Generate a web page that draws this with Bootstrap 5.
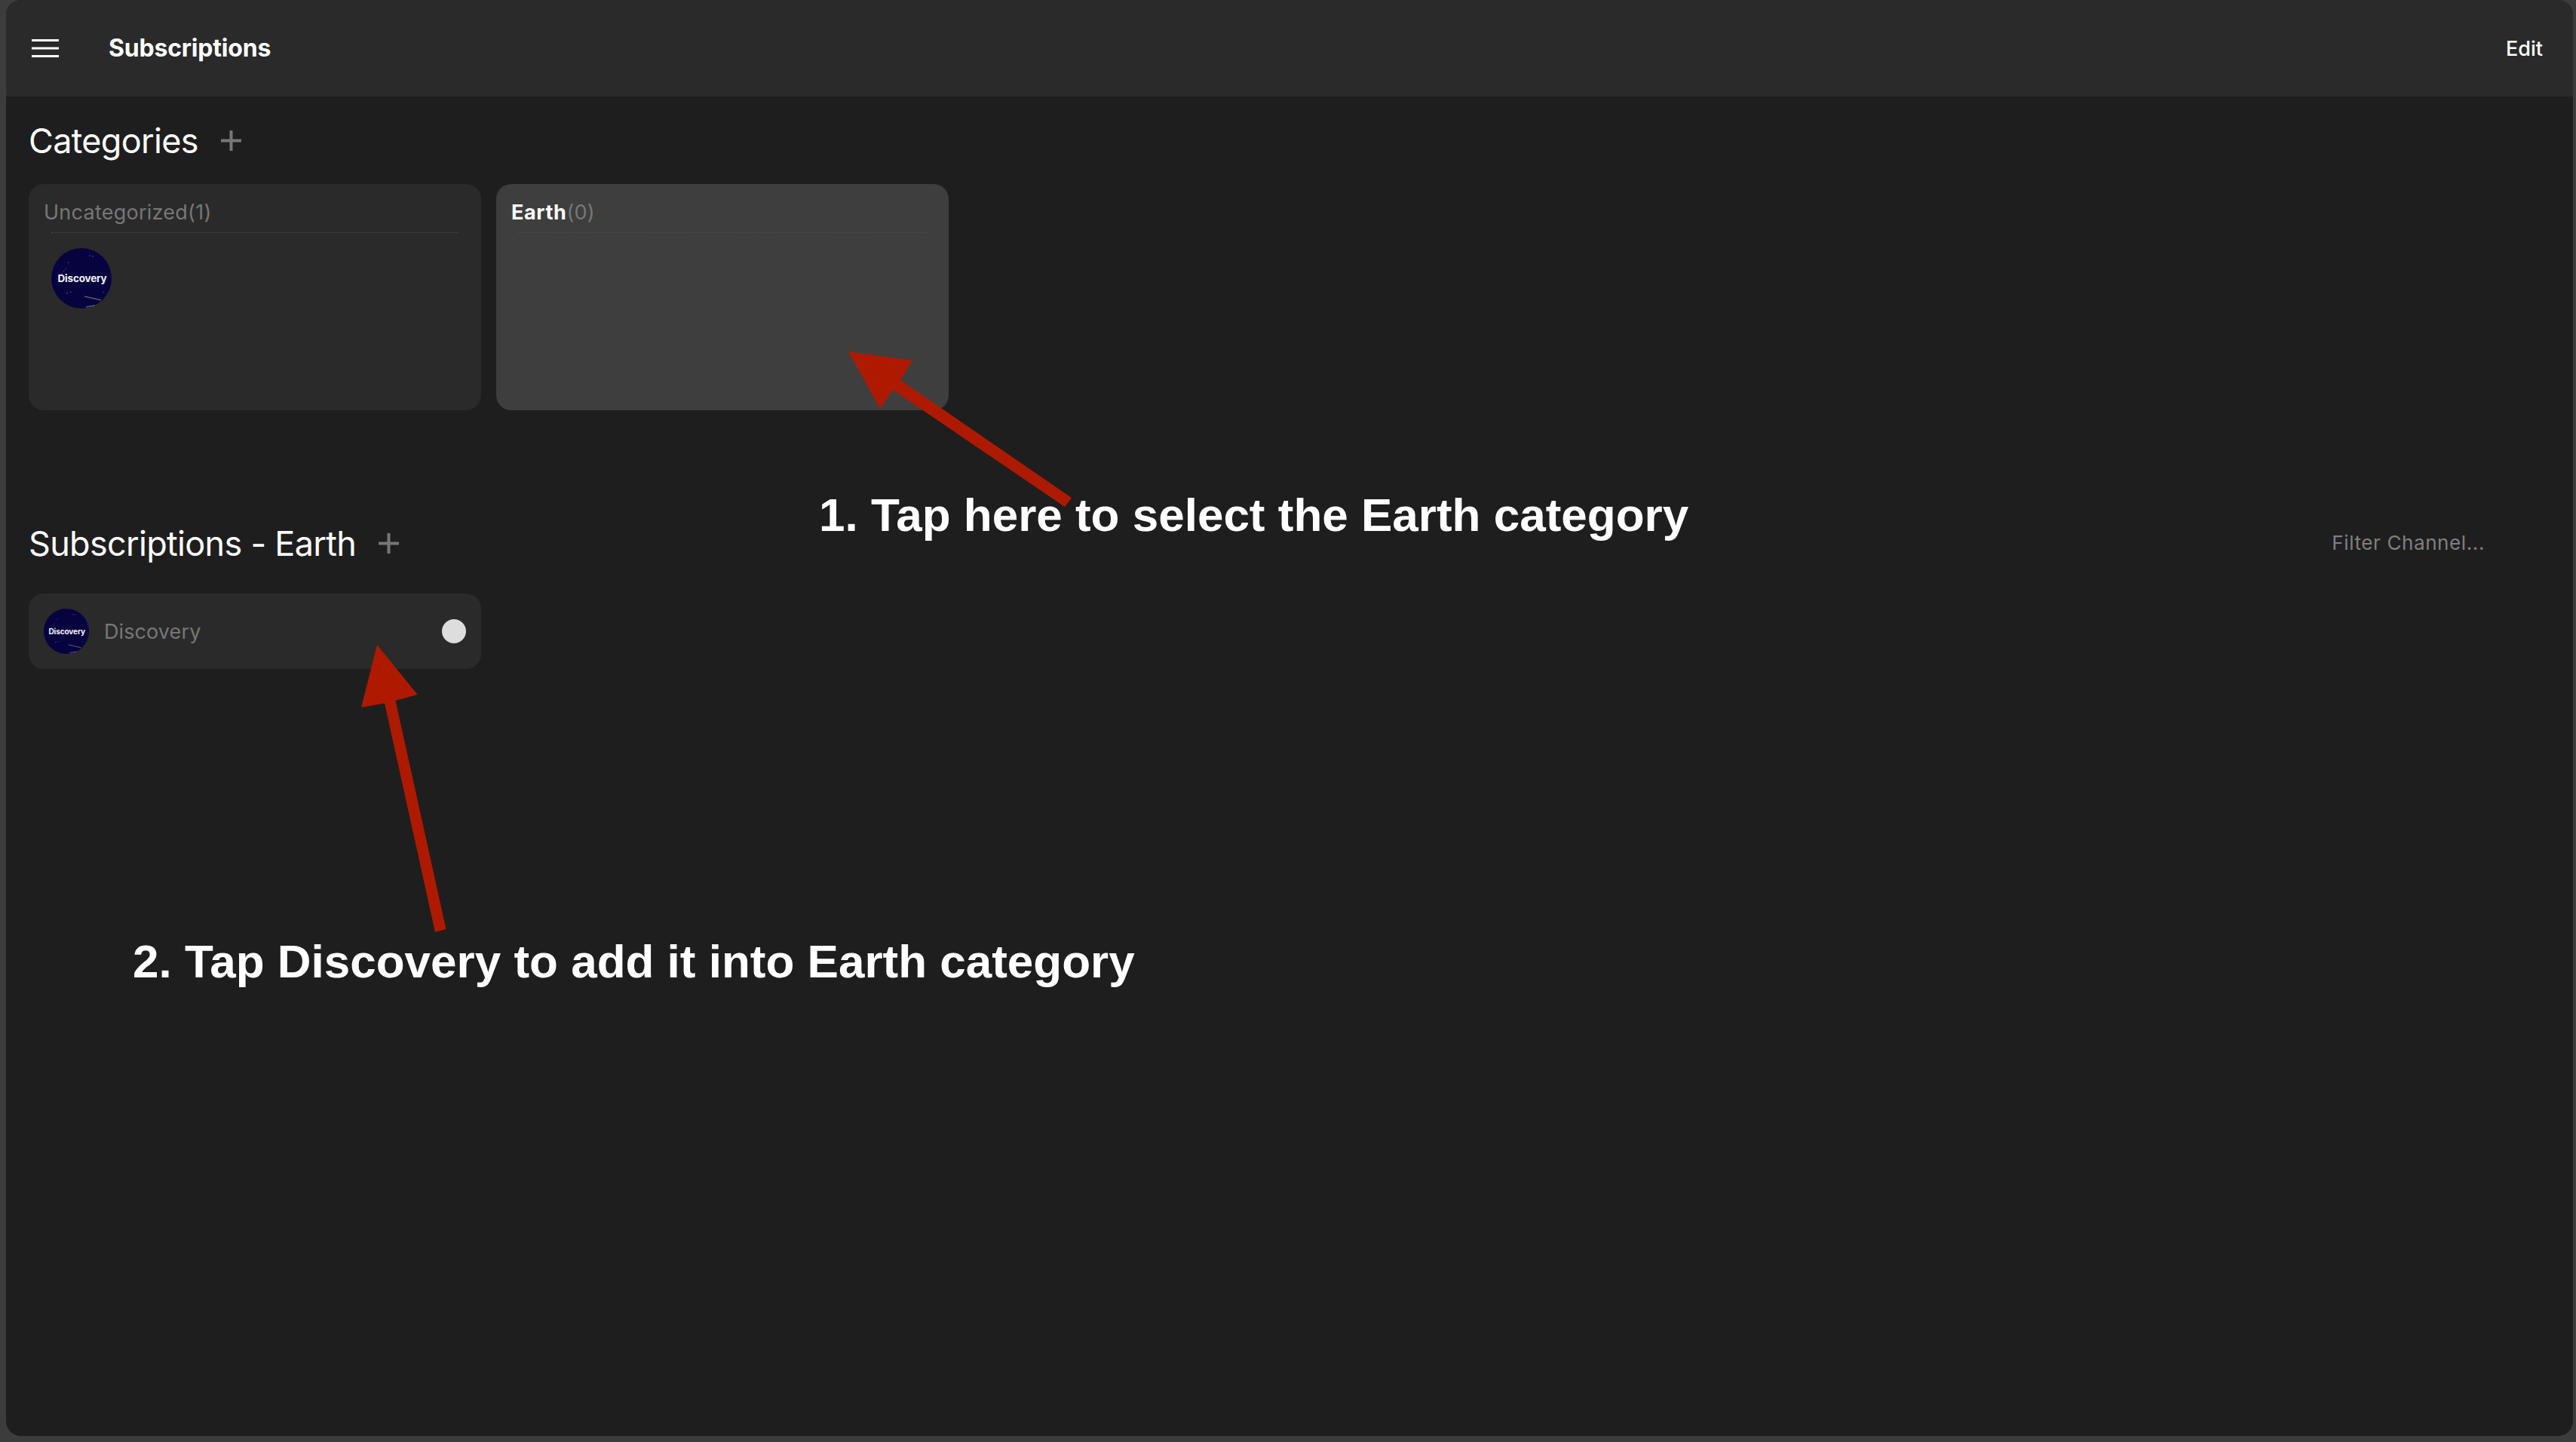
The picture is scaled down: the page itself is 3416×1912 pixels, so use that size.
<!DOCTYPE html>
<html lang="en">
<head>
<meta charset="utf-8">
<title>Subscriptions</title>
<link href="https://cdn.jsdelivr.net/npm/bootstrap@5.3.0/dist/css/bootstrap.min.css" rel="stylesheet">
<style>
html, body { height: 100%; }
body { background: #3c3c3c; font-family: Inter, "Noto Sans", sans-serif; padding: 0 4px 8px 8px; position: relative; overflow: hidden; }
.app-frame { height: 100%; background: #1e1e1e; border-radius: 20px; overflow: hidden; }
.app-bar { height: 128px; background: #2a2a2a; padding: 0 40px 0 34px; flex-wrap: nowrap; }
.menu-icon { width: 36px; height: 24px; display: block; }
.app-title { font-size: 32px; font-weight: 700; color: #fff; margin: 0 0 0 66px; line-height: 1; letter-spacing: -.2px; }
.edit-link { font-size: 27px; font-weight: 500; color: #fff; text-decoration: none; line-height: 1; }
.section-head { height: 64px; padding: 0 30px; }
.main-pad { padding-top: 26px; }
.section-title { font-size: 45px; font-weight: 400; color: #fff; margin: 0; line-height: 1; letter-spacing: -.7px; }
.plus-icon { width: 27px; height: 27px; margin-left: 30px; display: block; }
.cat-row { padding: 0 30px; gap: 20px; margin-top: 26px; }
.cat-card { width: 600px; height: 300px; background: #2a2a2a; border: 0; border-radius: 20px; padding: 0 20px; }
.cat-card.is-on { background: #3e3e3e; }
.cat-head { height: 64px; font-size: 27px; line-height: 36px; padding-top: 20px; color: #777; margin-bottom: 0; white-space: nowrap; letter-spacing: .25px; }
.cat-head b { color: #fff; font-weight: 700; letter-spacing: .6px; }
.cat-rule { height: 0; border-top: 1px dotted #4c4c4c; margin: 0 10px; }
.cat-avatar { width: 80px; height: 80px; margin: 20px 0 0 10px; display: block; }
.sub-head { margin-top: 144px; justify-content: space-between; }
.filter-hint { font-size: 26px; color: #808080; margin-right: 87px; line-height: 1; letter-spacing: .6px; }
.chan-list { padding: 0 30px; margin-top: 35px; }
.chan-item { width: 600px; height: 100px; background: #2a2a2a; border-radius: 20px; padding: 0 20px; }
.chan-avatar { width: 60px; height: 60px; display: block; }
.chan-name { font-size: 27px; color: #777; margin-left: 20px; line-height: 1; letter-spacing: .1px; }
.chan-dot { width: 32px; height: 32px; background: #ddd; border-radius: 50%; }
.arrow-layer { position: absolute; left: 0; top: 0; pointer-events: none; }
.note { position: absolute; font-family: "Liberation Sans", Arial, sans-serif; font-weight: 700; font-size: 62px; line-height: 1; color: #fff; white-space: nowrap; }
.note-one { left: 1086px; top: 652px; }
.note-two { left: 176px; top: 1244px; }
</style>
</head>
<body>
<svg width="0" height="0" class="d-block position-absolute">
  <defs>
    <symbol id="logo" viewBox="0 0 80 80">
      <circle cx="40" cy="40" r="40" fill="#07033f"/>
      <g fill="none" stroke="#5a5878">
        <path d="M11 38l10-13M22 20l3-3M50 10l6 1" stroke-dasharray="2 2"/>
        <path d="M44 64l22 5M46 78l12-2" stroke-width="1.5"/>
        <path d="M20 60l10-3M68 58l4 3" stroke-dasharray="2 3"/>
      </g>
      <text x="41" y="45" text-anchor="middle" font-family="Inter, sans-serif" font-weight="700" font-size="13.5" letter-spacing="-.2" fill="#f2f2f2">Discovery</text>
    </symbol>
    <symbol id="plus" viewBox="0 0 27 27">
      <path d="M0 13.5h27M13.5 0v27" stroke="#777" stroke-width="4" fill="none"/>
    </symbol>
  </defs>
</svg>

<div class="app-frame d-flex flex-column">
  <nav class="navbar app-bar d-flex align-items-center justify-content-between">
    <div class="d-flex align-items-center">
      <svg class="menu-icon" viewBox="0 0 36 24" aria-label="Menu"><path d="M0 1.5h36M0 12h36M0 22.5h36" stroke="#fff" stroke-width="3"/></svg>
      <h1 class="app-title">Subscriptions</h1>
    </div>
    <a class="edit-link" href="#">Edit</a>
  </nav>

  <main class="flex-grow-1 main-pad">
    <div class="section-head d-flex align-items-center">
      <h2 class="section-title">Categories</h2>
      <svg class="plus-icon"><use href="#plus"/></svg>
    </div>
    <div class="cat-row d-flex">
      <div class="card cat-card">
        <p class="cat-head">Uncategorized(1)</p>
        <div class="cat-rule"></div>
        <svg class="cat-avatar"><use href="#logo"/></svg>
      </div>
      <div class="card cat-card is-on">
        <p class="cat-head"><b>Earth</b>(0)</p>
        <div class="cat-rule"></div>
      </div>
    </div>

    <div class="section-head sub-head d-flex align-items-center">
      <div class="d-flex align-items-center">
        <h2 class="section-title">Subscriptions - Earth</h2>
        <svg class="plus-icon"><use href="#plus"/></svg>
      </div>
      <span class="filter-hint">Filter Channel...</span>
    </div>
    <div class="chan-list">
      <div class="chan-item d-flex align-items-center">
        <svg class="chan-avatar"><use href="#logo"/></svg>
        <span class="chan-name flex-grow-1">Discovery</span>
        <span class="chan-dot"></span>
      </div>
    </div>
  </main>
</div>

<svg class="arrow-layer" width="3416" height="1912" viewBox="0 0 3416 1912" aria-hidden="true">
  <polygon fill="#ad1a00" points="1125,466 1210,478 1194,504 1421,660 1412,672 1184,517 1167,542"/>
  <polygon fill="#ad1a00" points="500,855 553.6,921 524.5,929 591.5,1232 577,1236 510,932.6 479,938"/>
</svg>
<div class="note note-one">1. Tap here to select the Earth category</div>
<div class="note note-two">2. Tap Discovery to add it into Earth category</div>

<script src="https://cdn.jsdelivr.net/npm/bootstrap@5.3.0/dist/js/bootstrap.bundle.min.js"></script>
</body>
</html>
